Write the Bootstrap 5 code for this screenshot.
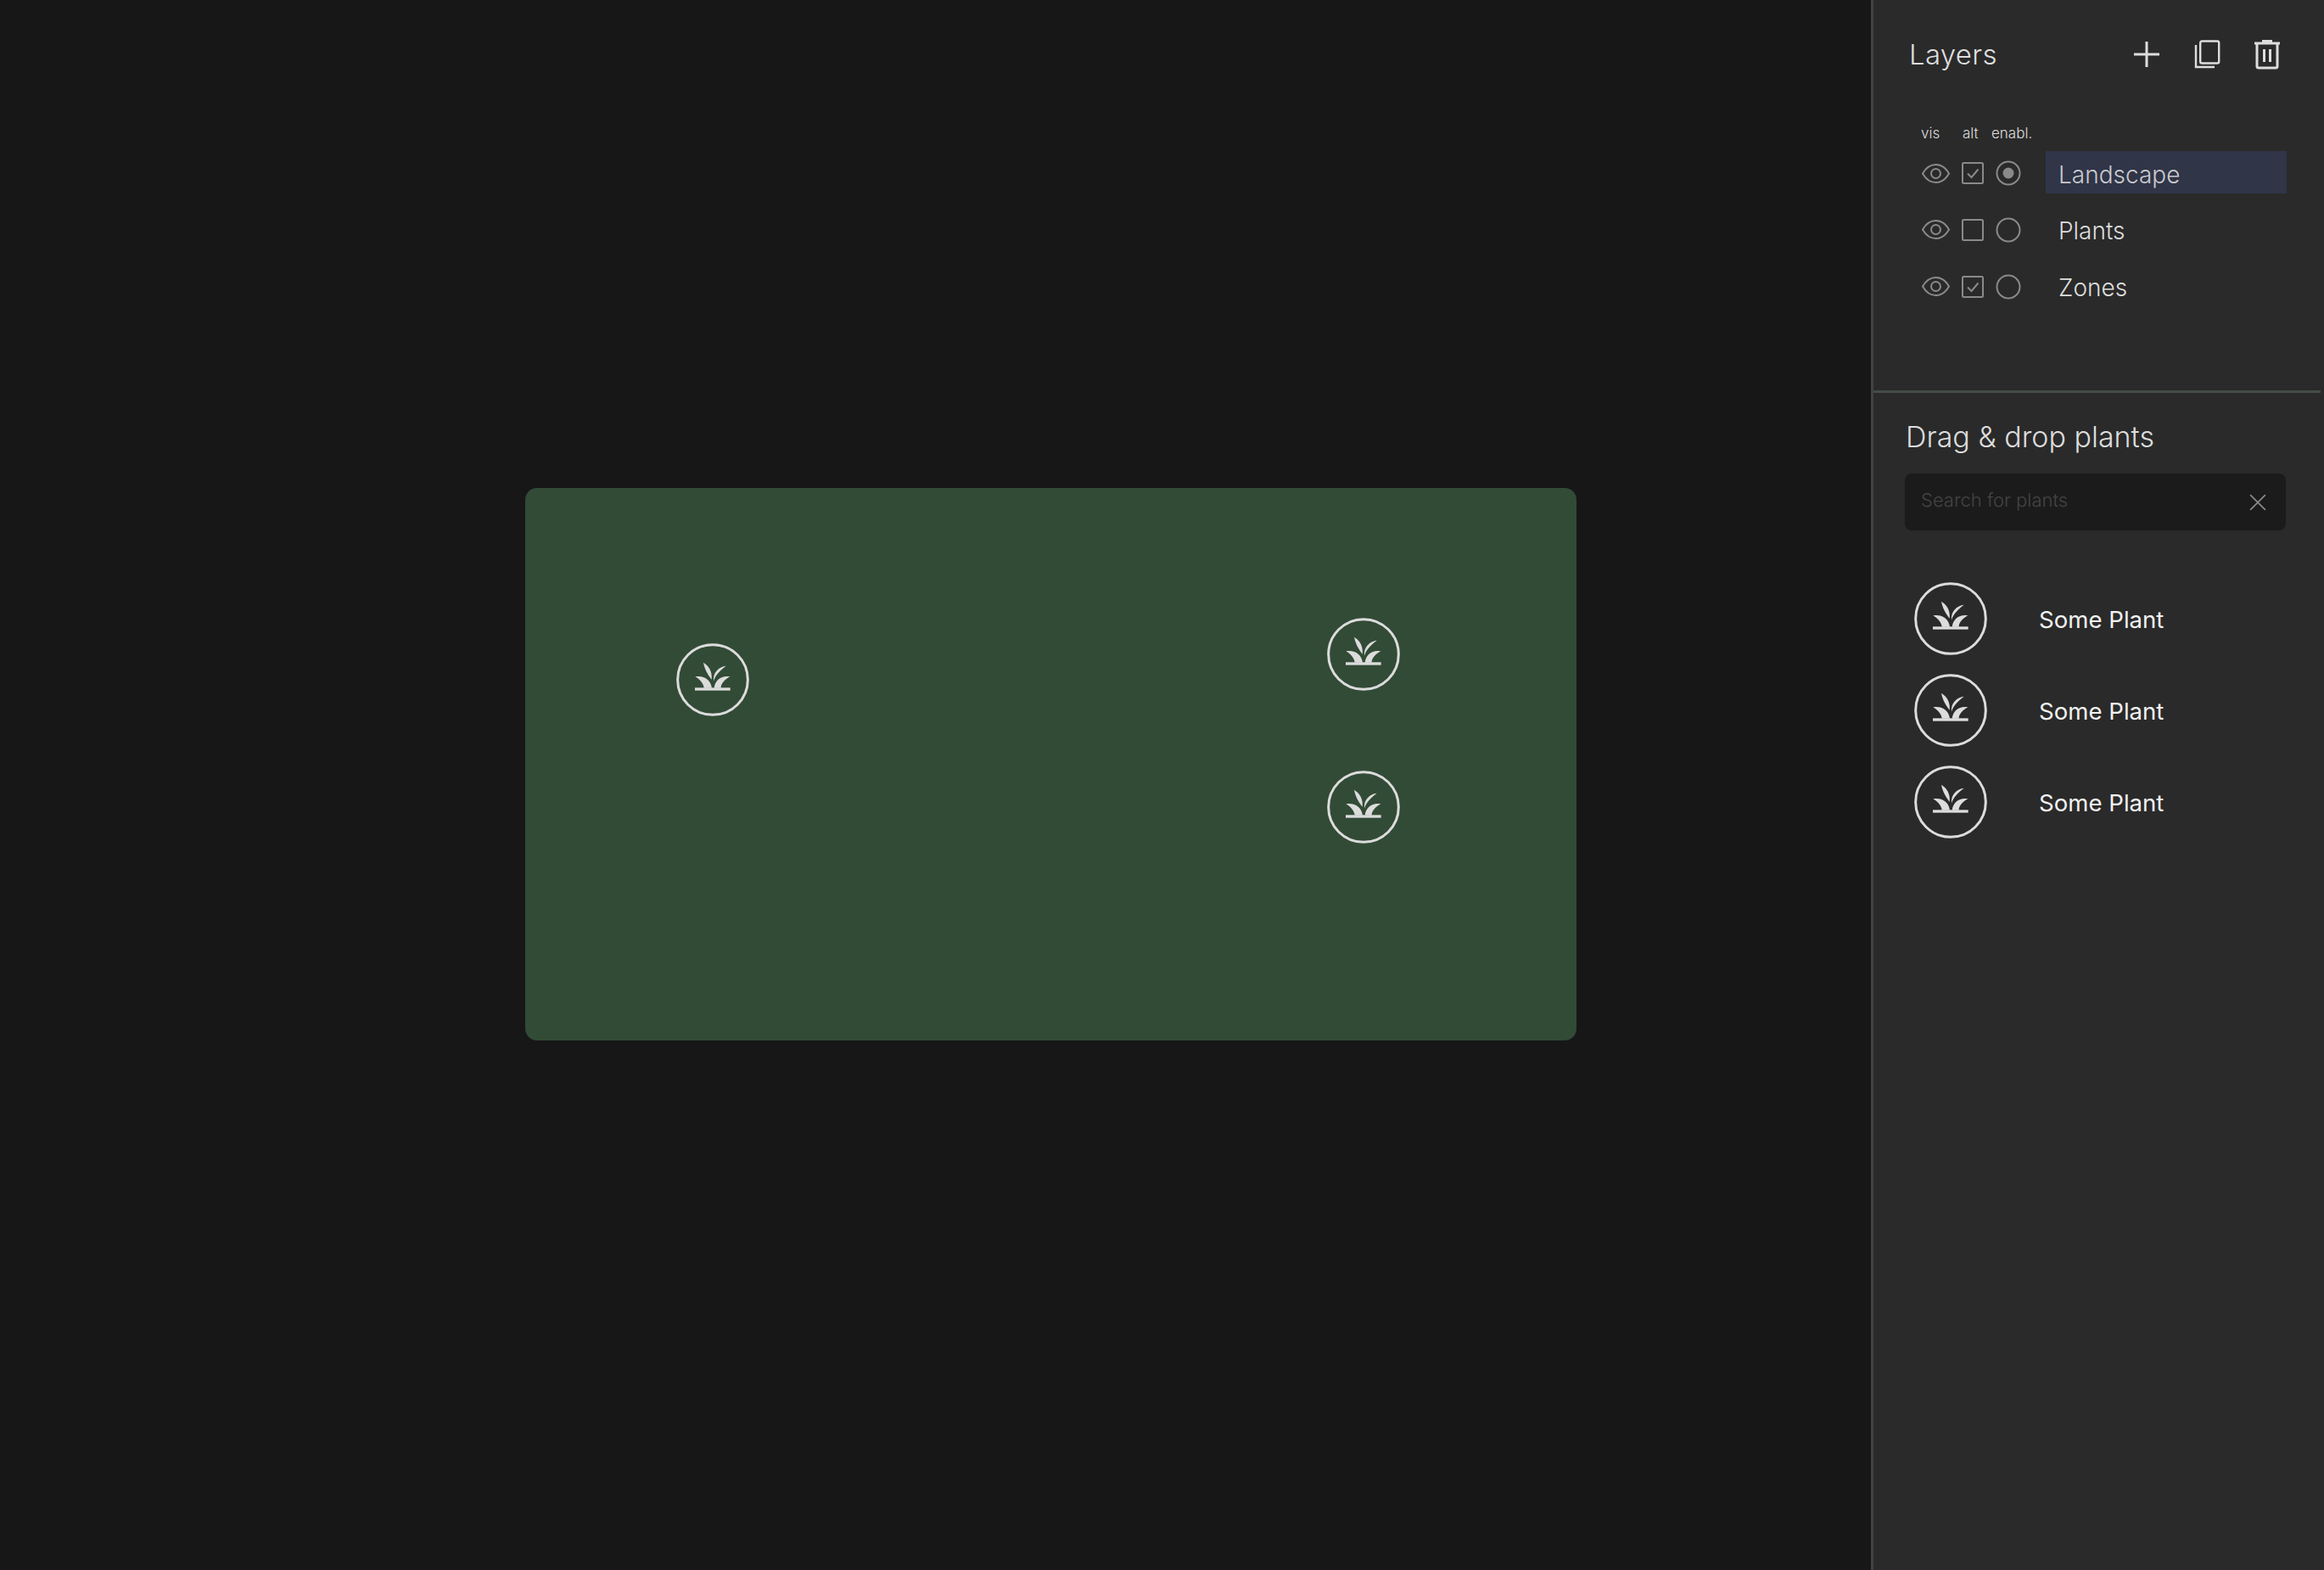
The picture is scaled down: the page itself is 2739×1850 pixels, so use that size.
<!DOCTYPE html>
<html lang="en">
<head>
  <meta charset="UTF-8" />
  <meta name="viewport" content="width=device-width, initial-scale=1" />
  <title>Garden Layers</title>
  <link rel="stylesheet" href="https://cdn.jsdelivr.net/npm/bootstrap@5.3.0/dist/css/bootstrap.min.css" />
  <style>
    body { background: #171717; font-family: Inter, "Liberation Sans", sans-serif; color: #ddd; overflow: hidden; }
    .app-shell { height: 1850px; }
    /* stage holds the free canvas */
    .stage { width: 2205px; padding: 575px 0 0 619px; }
    .land { position: relative; width: 1239px; height: 651px; background: #324b36; border-radius: 14px; }
    .pin { position: absolute; width: 86px; height: 86px; }
    /* sidebar */
    .side-panel { width: 534px; background: #2a2a2a; border-left: 3px solid #434343; }
    .layers-box { height: 460px; padding-top: 40px; }
    .panel-top { height: 48px; padding: 0 50px 0 42px; }
    .panel-title { font-size: 33px; font-weight: 300; line-height: 48px; letter-spacing: .3px; color: #ddd; margin: 0; }
    .tool-icons { gap: 37px; }
    .tool-icons svg { width: 34px; height: 36px; display: block; }
    .tool-copy { transform: translateX(1px); }
    .col-labels { height: 20px; margin-top: 59px; padding-left: 56px; margin-bottom: 4px; font-size: 17px; font-weight: 300; line-height: 20px; color: #ddd; }
    .lbl-vis { width: 49px; }
    .lbl-alt { width: 34px; }
    .layer-row { height: 66.67px; padding-left: 56px; }
    .layer-toggles { width: 147px; }
    .ico-eye { width: 35px; height: 25px; margin-right: 13px; }
    .ico-check { width: 26px; height: 26px; margin-right: 14px; }
    .ico-radio { width: 30px; height: 30px; }
    .layer-name { width: 284px; height: 50px; margin-bottom: 3px; padding: 5px 0 0 15px; font-size: 28px; font-weight: 300; line-height: 47px; color: #ddd; }
    .layer-name.is-active { background: #303548; color: #c9cacd; }
    .panel-rule { width: 527px; height: 3px; background: #454c47; }
    .plants-box { padding: 0 0 0 37px; }
    .drag-title { font-size: 34px; font-weight: 300; line-height: 48px; margin: 28px 0 0 1px; color: #ddd; }
    .search-box { width: 449px; height: 67px; margin-top: 19px; background: #1b1b1b; border-radius: 8px; padding: 0 15px 0 19px; }
    .search-box input { background: transparent; border: 0; outline: 0; padding: 0; font-size: 22px; font-weight: 300; height: 60px; margin-bottom: 5px; color: #ddd; box-shadow: none; }
    .search-box input::placeholder { color: #444; opacity: 1; }
    .search-box svg { width: 20px; height: 20px; margin: 0 8px 0 0; }
    .plant-list { margin-top: 61px; padding-left: 11px; gap: 22px; }
    .plant-item { height: 86px; }
    .plant-item svg { width: 86px; height: 86px; margin-right: 61px; }
    .plant-name { font-size: 27.6px; line-height: 40px; padding-top: 2px; color: #f2f2f2; }
  </style>
</head>
<body>
  <!-- plant badge, reused on the canvas and in the list -->
  <svg width="0" height="0" class="position-absolute">
    <symbol id="plant-badge" viewBox="0 0 258 258">
      <circle cx="129" cy="129" r="124" fill="none" stroke="#dcdcdc" stroke-width="9" />
      <g transform="translate(66 68)" fill="#dcdcdc">
        <rect x="0" y="89" width="125" height="10" />
        <path d="M1 50C30 44 56 60 60 90H32C30 74 18 60 1 50Z" />
        <path d="M124 50C98 44 72 58 68 90H92C92 74 106 60 124 50Z" />
        <path d="M30 0C50 12 62 32 59 60C50 48 35 28 30 0Z" />
        <path d="M110 12C86 14 62 36 66 66C72 44 92 26 110 12Z" />
      </g>
    </symbol>
    <symbol id="eye" viewBox="0 0 35 25">
      <path d="M2 12.5C6 5.500 11 2 17.500 2S29 5.500 33 12.500C29 19.500 24 23 17.500 23S6 19.500 2 12.500Z" fill="none" stroke="#8a8a8a" stroke-width="2" />
      <circle cx="17.500" cy="12.500" r="5.500" fill="none" stroke="#8a8a8a" stroke-width="2" />
    </symbol>
  </svg>

  <div class="app-shell d-flex">
    <main class="stage flex-shrink-0">
      <div class="land">
        <svg class="pin" style="left:178px;top:183px"><use href="#plant-badge" /></svg>
        <svg class="pin" style="left:945px;top:153px"><use href="#plant-badge" /></svg>
        <svg class="pin" style="left:945px;top:333px"><use href="#plant-badge" /></svg>
      </div>
    </main>

    <aside class="side-panel flex-shrink-0">
      <section class="layers-box">
        <div class="panel-top d-flex align-items-center justify-content-between">
          <h2 class="panel-title">Layers</h2>
          <div class="tool-icons d-flex align-items-center">
            <svg viewBox="0 0 34 36"><path d="M17 3V33M2 18H32" stroke="#ddd" stroke-width="3" fill="none" /></svg>
            <svg class="tool-copy" viewBox="0 0 34 36"><rect x="8.200" y="2.500" width="22" height="26" rx="2" fill="none" stroke="#ddd" stroke-width="2.400" /><path d="M3 7V33H25" fill="none" stroke="#ddd" stroke-width="2.400" /></svg>
            <svg viewBox="0 0 34 36"><path d="M2 5H32" stroke="#ddd" stroke-width="3" /><path d="M11 2.500H23" stroke="#ddd" stroke-width="3" /><path d="M5 5V32a2 2 0 0 0 2 2H27a2 2 0 0 0 2-2V5" fill="none" stroke="#ddd" stroke-width="3" /><path d="M13.500 12V27M20.500 12V27" stroke="#ddd" stroke-width="3" /></svg>
          </div>
        </div>
        <div class="col-labels d-flex">
          <span class="lbl-vis">vis</span><span class="lbl-alt">alt</span><span>enabl.</span>
        </div>

        <div id="layerRows"></div>
      </section>

      <div class="panel-rule"></div>

      <section class="plants-box">
        <h2 class="drag-title">Drag &amp; drop plants</h2>
        <div class="search-box d-flex align-items-center">
          <input class="flex-grow-1" type="text" placeholder="Search for plants" />
          <svg viewBox="0 0 18 18"><path d="M1 1L17 17M17 1L1 17" stroke="#8a8a8a" stroke-width="1.500" /></svg>
        </div>
        <div class="plant-list d-flex flex-column">
          <div class="plant-item d-flex align-items-center"><svg><use href="#plant-badge" /></svg><span class="plant-name">Some Plant</span></div>
          <div class="plant-item d-flex align-items-center"><svg><use href="#plant-badge" /></svg><span class="plant-name">Some Plant</span></div>
          <div class="plant-item d-flex align-items-center"><svg><use href="#plant-badge" /></svg><span class="plant-name">Some Plant</span></div>
        </div>
      </section>
    </aside>
  </div>

  <script src="https://cdn.jsdelivr.net/npm/bootstrap@5.3.0/dist/js/bootstrap.bundle.min.js"></script>
  <script>
    // layer rows: name, alt checked, enabled
    const layers = [
      { name: "Landscape", alt: true, enabled: true },
      { name: "Plants", alt: false, enabled: false },
      { name: "Zones", alt: true, enabled: false }
    ];
    const rows = document.getElementById("layerRows");
    layers.forEach(l => {
      const tick = l.alt ? '<path d="M7 13.500L11.500 18L19.500 8.500" fill="none" stroke="#8a8a8a" stroke-width="2" />' : "";
      const dot = l.enabled ? '<circle cx="15" cy="15" r="6.500" fill="#8a8a8a" />' : "";
      rows.insertAdjacentHTML("beforeend", `
        <div class="layer-row d-flex align-items-center">
          <div class="layer-toggles d-flex align-items-center">
            <svg class="ico-eye"><use href="#eye" /></svg>
            <svg class="ico-check" viewBox="0 0 26 26"><rect x="1" y="1" width="24" height="24" rx="1.500" fill="none" stroke="#8a8a8a" stroke-width="2" />${tick}</svg>
            <svg class="ico-radio" viewBox="0 0 30 30"><circle cx="15" cy="15" r="13.500" fill="none" stroke="#8a8a8a" stroke-width="2" />${dot}</svg>
          </div>
          <div class="layer-name ${l.enabled ? "is-active" : ""}">${l.name}</div>
        </div>`);
    });
  </script>
</body>
</html>
